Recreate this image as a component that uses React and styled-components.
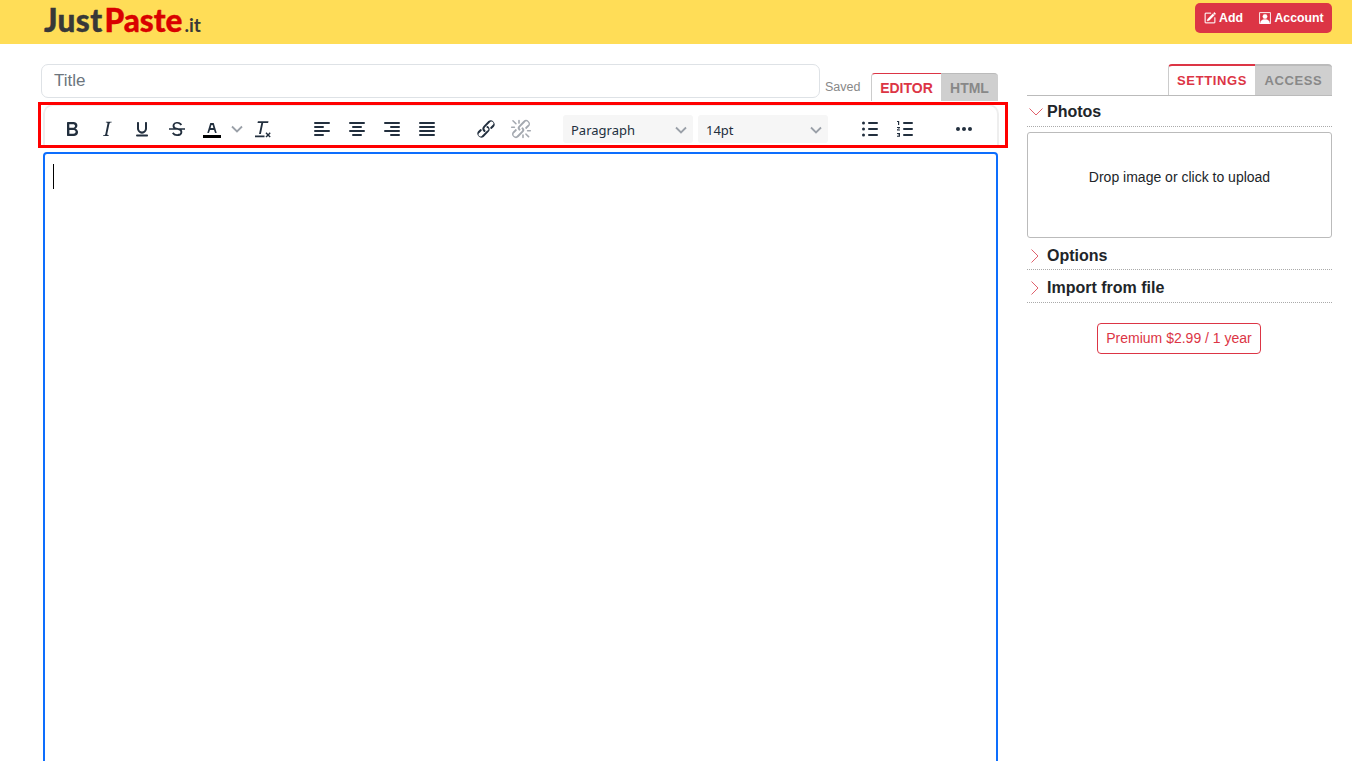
import styled, { createGlobalStyle } from "styled-components";
import { BsPencilSquare, BsPersonSquare } from "react-icons/bs";

const GlobalStyle = createGlobalStyle`
  html, body {
    margin: 0;
    height: 100%;
    overflow: hidden;
    background: #fff;
    font-family: "Liberation Sans", Arial, sans-serif;
    color: #212529;
  }
  * { box-sizing: border-box; }
`;

const Page = styled.div`
  height: 761px;
  overflow: hidden;
`;

const Header = styled.header`
  height: 44px;
  background: #ffdd57;
  display: flex;
  justify-content: space-between;
  padding: 3px 20px 0 44px;
`;

const Logo = styled.div`
  font-family: Lato, "Open Sans", sans-serif;
  font-weight: 900;
  font-size: 31.5px;
  line-height: 34px;
  letter-spacing: 0.4px;
  color: #383838;
  -webkit-text-stroke: 0.4px currentColor;
  white-space: nowrap;
`;

const LogoRed = styled.span`
  margin-left: 2px;
  letter-spacing: 0;
  color: #d90000;
`;

const LogoTld = styled.span`
  margin-left: 2px;
  font-size: 19px;
  font-weight: 700;
  letter-spacing: 0;
  -webkit-text-stroke: 0;
`;

const UserMenu = styled.div`
  width: 137px;
  height: 30px;
  background: #dc3545;
  border-radius: 5px;
  display: flex;
  align-items: center;
  gap: 16.5px;
  padding-left: 9px;
`;

const MenuLink = styled.a`
  display: flex;
  align-items: center;
  gap: 3px;
  color: #fff;
  font-size: 12.3px;
  font-weight: 700;
  svg { font-size: 12px; stroke: currentColor; stroke-width: 0.4; }
`;

const Main = styled.main`
  display: flex;
  gap: 29px;
  padding: 20px 20px 0 41px;
`;

const EditorColumn = styled.section`
  width: 957px;
  flex: none;
`;

const TopRow = styled.div`
  display: flex;
  height: 37px;
`;

const TitleInput = styled.div`
  width: 779px;
  height: 34px;
  border: 1px solid #dee2e6;
  border-radius: 7px;
  padding: 0 12px;
  font-size: 17px;
  line-height: 31px;
  color: #6c757d;
`;

const Saved = styled.span`
  margin: 16px 0 0 5px;
  font-size: 12.5px;
  line-height: 14px;
  color: #888;
`;

const Tab = styled.div`
  width: ${(p) => p.$width}px;
  height: 28px;
  display: flex;
  align-items: center;
  justify-content: center;
  font-size: 14px;
  font-weight: 700;
  color: ${(p) => (p.$active ? "#dc3545" : "#888")};
  background: ${(p) => (p.$active ? "#fff" : "#cfcfcf")};
  border-top: 1px solid ${(p) => (p.$active ? "#dc3545" : "#bbb")};
  border-left: ${(p) => (p.$active ? "1px solid #ccc" : "0")};
  border-radius: ${(p) => (p.$active ? "4px 0 0 0" : "0 4px 0 0")};
`;

const SidebarTab = styled(Tab)`
  height: 31px;
  font-size: 13px;
  letter-spacing: 0.6px;
  border-top-width: 2px;
`;

const EditorTabs = styled.div`
  display: flex;
  margin: 9px 0 0 auto;
  height: 28px;
`;

const ToolbarWrap = styled.div`
  position: relative;
  margin: 3px -1px 0 2px;
`;

const Toolbar = styled.div`
  height: 44px;
  display: flex;
  gap: 25px;
  padding: 6px 0 0 10px;
  border: 2px solid #eee;
  border-bottom: 0;
  border-radius: 10px 10px 0 0;
`;

const Highlight = styled.div`
  position: absolute;
  left: -5px;
  right: -9px;
  top: -2px;
  height: 46px;
  border: 3px solid #f00;
  pointer-events: none;
`;

const Group = styled.div`
  display: flex;
  gap: ${(p) => p.$gap ?? 1}px;
`;

const ToolButton = styled.button`
  width: ${(p) => p.$width ?? 34}px;
  height: 34px;
  padding: 0;
  border: 0;
  background: none;
  display: flex;
  align-items: center;
  justify-content: center;
  color: ${(p) => (p.$disabled ? "#a4a9b0" : "#222f3e")};
  svg { fill: currentColor; display: block; }
`;

const ColorSwatch = styled.span`
  position: absolute;
  left: 8px;
  bottom: 8px;
  width: 18px;
  height: 3px;
  background: #000;
`;

const SplitButton = styled(ToolButton)`
  position: relative;
  justify-content: flex-start;
  padding-left: 5px;
  gap: 5px;
`;

const Select = styled.div`
  width: 130px;
  height: 28px;
  margin-top: 3px;
  background: #f6f6f6;
  border-radius: 3px;
  display: flex;
  align-items: center;
  justify-content: space-between;
  padding: 1px 4px 0 8px;
  font-family: "Noto Sans", "Open Sans", sans-serif;
  font-size: 13px;
  color: #222f3e;
`;

const EditorBody = styled.div`
  margin: 4px 0 0 2px;
  height: 700px;
  border: 2px solid #0d6efd;
  border-radius: 4px;
  padding: 10px 8px;
`;

const Caret = styled.div`
  width: 1px;
  height: 25px;
  background: #000;
`;

const Sidebar = styled.aside`
  width: 305px;
  flex: none;
`;

const SidebarTabs = styled.div`
  display: flex;
  justify-content: flex-end;
  border-bottom: 1px solid #bbb;
  height: 32px;
`;

const SectionRow = styled.div`
  height: ${(p) => p.$height ?? 32}px;
  display: flex;
  align-items: center;
  gap: ${(p) => (p.$open ? 4 : 6)}px;
  padding: ${(p) => p.$top ?? 2}px 0 0 ${(p) => (p.$open ? 2 : 4)}px;
  border-bottom: 1px dotted #aaa;
  font-size: 16px;
  font-weight: 700;
`;

const ChevronSlot = styled.span`
  width: ${(p) => (p.$open ? 14 : 10)}px;
  display: flex;
  svg { display: block; fill: none; stroke: #e0616c; stroke-width: 1; }
`;

const DropZone = styled.div`
  height: 106px;
  margin: 5px 0 2px;
  border: 1px solid #bbb;
  border-radius: 3px;
  display: flex;
  justify-content: center;
  padding-top: 36px;
  font-size: 14px;
  line-height: 17px;
`;

const PremiumWrap = styled.div`
  display: flex;
  margin-top: 20px;
  padding-left: 70px;
`;

const PremiumLink = styled.a`
  width: 164px;
  height: 31px;
  border: 1px solid #dc3545;
  border-radius: 4px;
  color: #dc3545;
  font-size: 14px;
  line-height: 29px;
  text-align: center;
`;

const ChevronIcon = styled.svg`
  && {
    flex: none;
    fill: none;
    stroke: #9aa0a8;
    stroke-width: 1.8;
  }
`;

const Icon = ({ d, size = 24 }) => (
  <svg width={size} height={size} viewBox="0 0 24 24">
    <path d={d} />
  </svg>
);

const Chevron = () => (
  <ChevronIcon width="16" height="16" viewBox="0 0 16 16">
    <path d="M3 5.5l5 5 5-5" />
  </ChevronIcon>
);

const icons = {
  bold: "M7.8 19c-.3 0-.5 0-.6-.2l-.2-.5V5.7c0-.2 0-.4.2-.5l.6-.2h5c1.5 0 2.7.3 3.5 1 .7.6 1.1 1.4 1.1 2.5a3 3 0 0 1-.6 1.9c-.4.6-1 1-1.6 1.2.4.1.9.3 1.3.6s.8.7 1 1.2c.4.4.5 1 .5 1.6 0 1.3-.4 2.3-1.3 3-.8.7-2.1 1-3.8 1H7.8zm5-8.3c.6 0 1.2-.1 1.6-.5.4-.3.6-.7.6-1.3 0-1.1-.8-1.7-2.3-1.7H9.3v3.5h3.4zm.5 6c.7 0 1.3-.1 1.7-.4.4-.4.6-.9.6-1.5s-.2-1-.7-1.4c-.4-.3-1-.4-2-.4H9.4v3.8h4z",
  italic: "M16.7 4.7l-.1.9h-.3c-.6 0-1 0-1.4.3-.3.3-.4.6-.5 1.1l-2.1 9.8v.6c0 .5.4.8 1.4.8h.2l-.2.8H8l.2-.8h.2c1.1 0 1.8-.5 2-1.5l2-9.8.1-.5c0-.6-.4-.8-1.4-.8h-.3l.2-.9h5.8z",
  underline: "M16 5c.6 0 1 .4 1 1v5.5a4 4 0 0 1-.4 1.8l-.5 1a4 4 0 0 1-1.5 1.5 4.6 4.6 0 0 1-5.2 0 4 4 0 0 1-1.5-1.5l-.5-1a4 4 0 0 1-.4-1.8V6c0-.6.4-1 1-1s1 .4 1 1v5.5c0 1.7 1.3 3 3 3s3-1.3 3-3V6c0-.6.4-1 1-1zM7 17.5h10c.6 0 1 .4 1 1s-.4 1-1 1H7a1 1 0 0 1 0-2z",
  strike: "M15.6 8.5c-.5-.7-1-1.1-1.3-1.3-.6-.4-1.3-.6-2-.6-2.7 0-2.8 1.7-2.8 2.1 0 1.6 1.8 2 3.2 2.3 4.4.9 4.6 2.8 4.6 3.9 0 1.4-.7 4.1-5 4.1A6.2 6.2 0 0 1 7 16.4l1.5-1.1c.4.6 1.6 2 3.7 2 1.6 0 2.5-.4 3-1.2.4-.8.3-2-.8-2.6-.7-.4-1.6-.7-2.9-1-1-.2-3.9-.8-3.9-3.6C7.6 6 10.3 5 12.4 5c2.9 0 4.2 1.6 4.7 2.4l-1.5 1.1zM4 11.2h16v1.6H4z",
  colorA: "M8.7 16h-.8a.5.5 0 0 1-.5-.6l2.7-9c.1-.3.3-.4.5-.4h2.8c.2 0 .4.1.5.4l2.7 9a.5.5 0 0 1-.5.6h-.8a.5.5 0 0 1-.4-.4l-.7-2.2c0-.3-.3-.4-.5-.4h-3.4c-.2 0-.4.1-.5.4l-.7 2.2c0 .3-.2.4-.4.4zm2.6-7.6l-.6 2a.5.5 0 0 0 .5.6h1.6a.5.5 0 0 0 .5-.6l-.6-2c0-.3-.3-.4-.5-.4h-.4c-.2 0-.4.1-.5.4z",
  clear: "M12.2 6l-2.3 11H8l2.3-11H6.5l.4-1.8h10.6L17.1 6h-4.9zM4 18.5h9.5v1.8H4zM15.5 15.2l1.6 1.7 1.6-1.7 1 1-1.6 1.7 1.6 1.7-1 1-1.6-1.7-1.6 1.7-1-1 1.6-1.7-1.6-1.7z",
  alignLeft: "M5 5h14a1 1 0 0 1 0 2H5a1 1 0 1 1 0-2zm0 4h8a1 1 0 0 1 0 2H5a1 1 0 0 1 0-2zm0 4h14a1 1 0 0 1 0 2H5a1 1 0 0 1 0-2zm0 4h8a1 1 0 0 1 0 2H5a1 1 0 0 1 0-2z",
  alignCenter: "M5 5h14a1 1 0 0 1 0 2H5a1 1 0 1 1 0-2zm3 4h8a1 1 0 0 1 0 2H8a1 1 0 1 1 0-2zm0 8h8a1 1 0 0 1 0 2H8a1 1 0 0 1 0-2zm-3-4h14a1 1 0 0 1 0 2H5a1 1 0 0 1 0-2z",
  alignRight: "M5 5h14a1 1 0 0 1 0 2H5a1 1 0 1 1 0-2zm6 4h8a1 1 0 0 1 0 2h-8a1 1 0 0 1 0-2zm0 8h8a1 1 0 0 1 0 2h-8a1 1 0 0 1 0-2zm-6-4h14a1 1 0 0 1 0 2H5a1 1 0 0 1 0-2z",
  justify: "M5 5h14a1 1 0 0 1 0 2H5a1 1 0 1 1 0-2zm0 4h14a1 1 0 0 1 0 2H5a1 1 0 1 1 0-2zm0 4h14a1 1 0 0 1 0 2H5a1 1 0 0 1 0-2zm0 4h14a1 1 0 0 1 0 2H5a1 1 0 0 1 0-2z",
  link: "M6.2 12.3a1 1 0 0 1 1.4 1.4l-2 2a2 2 0 1 0 2.6 2.8l4.8-4.8a1 1 0 0 0 0-2.8 1 1 0 1 1 1.4-1.3 4 4 0 0 1 0 5.5l-4.8 4.8a4 4 0 0 1-5.5-5.6l2.1-2zm11.6-.6a1 1 0 0 1-1.4-1.4l2-2a2 2 0 1 0-2.6-2.8L11 10.3a2 2 0 0 0 0 2.8 1 1 0 1 1-1.4 1.3 4 4 0 0 1 0-5.5l4.8-4.8a4 4 0 0 1 5.5 5.6l-2.1 2z",
  unlink: "M6.2 12.3a1 1 0 0 1 1.4 1.4l-2 2a2 2 0 1 0 2.6 2.8l4.8-4.8a1 1 0 0 0 0-1.4 1 1 0 1 1 1.4-1.3 2.9 2.9 0 0 1 0 4L9.6 20a3.9 3.9 0 0 1-5.5-5.5l2-2zm11.6-.6a1 1 0 0 1-1.4-1.4l2.1-2a2 2 0 1 0-2.7-2.8L11 10.3a1 1 0 0 0 0 1.4A1 1 0 1 1 9.6 13a2.9 2.9 0 0 1 0-4L14.4 4a3.9 3.9 0 0 1 5.5 5.5l-2 2zM7.6 6.3a.8.8 0 0 1-1 1.1L3.7 4.6a.8.8 0 1 1 1-1.1l2.9 2.8zm12.7 13a.8.8 0 0 1-1.1 1.1l-2.9-2.8a.8.8 0 0 1 1.1-1.1l2.9 2.8zM10 2.8c.4 0 .8.3.8.7v2.6a.8.8 0 0 1-1.6 0V3.5c0-.4.4-.7.8-.7zM2.7 9.5h2.7a.8.8 0 0 1 0 1.6H2.7a.8.8 0 0 1 0-1.6zM14 17.2c.4 0 .8.3.8.7v2.6a.8.8 0 0 1-1.6 0v-2.6c0-.4.4-.7.8-.7zm4.6-4.3h2.7a.8.8 0 0 1 0 1.6h-2.7a.8.8 0 0 1 0-1.6z",
  bullets: "M11 5h8a1 1 0 0 1 0 2h-8a1 1 0 0 1 0-2zm0 6h8a1 1 0 0 1 0 2h-8a1 1 0 0 1 0-2zm0 6h8a1 1 0 0 1 0 2h-8a1 1 0 0 1 0-2zM5.5 4.5a1.5 1.5 0 1 1 0 3 1.5 1.5 0 0 1 0-3zm0 6a1.5 1.5 0 1 1 0 3 1.5 1.5 0 0 1 0-3zm0 6a1.5 1.5 0 1 1 0 3 1.5 1.5 0 0 1 0-3z",
  numbers: "M11 5h8a1 1 0 0 1 0 2h-8a1 1 0 0 1 0-2zm0 6h8a1 1 0 0 1 0 2h-8a1 1 0 0 1 0-2zm0 6h8a1 1 0 0 1 0 2h-8a1 1 0 0 1 0-2zM5 4h1.2v4H5V5H4V4h1zM4 10h3v.9l-2 1.6h2v1H4v-.9l2-1.6H4v-1zm0 6h3v3.8H4v-1h2v-.5H4.8v-.8H6v-.5H4v-1z",
  more: "M6 10a2 2 0 0 0-2 2c0 1.1.9 2 2 2a2 2 0 0 0 2-2 2 2 0 0 0-2-2zm12 0a2 2 0 0 0-2 2c0 1.1.9 2 2 2a2 2 0 0 0 2-2 2 2 0 0 0-2-2zm-6 0a2 2 0 0 0-2 2c0 1.1.9 2 2 2a2 2 0 0 0 2-2 2 2 0 0 0-2-2z",
};

const formatGroup = ["bold", "italic", "underline", "strike"];
const alignGroup = ["alignLeft", "alignCenter", "alignRight", "justify"];

const App = () => {
  return (
    <Page>
      <GlobalStyle />
      <Header>
        <Logo>
          Just<LogoRed>Paste</LogoRed>
          <LogoTld>.it</LogoTld>
        </Logo>
        <UserMenu>
          <MenuLink>
            <BsPencilSquare /> Add
          </MenuLink>
          <MenuLink>
            <BsPersonSquare /> Account
          </MenuLink>
        </UserMenu>
      </Header>
      <Main>
        <EditorColumn>
          <TopRow>
            <TitleInput>Title</TitleInput>
            <Saved>Saved</Saved>
            <EditorTabs>
              <Tab $active $width={70}>EDITOR</Tab>
              <Tab $width={57}>HTML</Tab>
            </EditorTabs>
          </TopRow>
          <ToolbarWrap>
            <Toolbar>
              <Group>
                {formatGroup.map((name) => (
                  <ToolButton key={name}>
                    <Icon d={icons[name]} />
                  </ToolButton>
                ))}
                <SplitButton $width={50}>
                  <Icon d={icons.colorA} />
                  <ColorSwatch />
                  <Chevron />
                </SplitButton>
                <ToolButton>
                  <Icon d={icons.clear} />
                </ToolButton>
              </Group>
              <Group>
                {alignGroup.map((name) => (
                  <ToolButton key={name}>
                    <Icon d={icons[name]} />
                  </ToolButton>
                ))}
              </Group>
              <Group>
                <ToolButton>
                  <Icon d={icons.link} />
                </ToolButton>
                <ToolButton $disabled>
                  <Icon d={icons.unlink} />
                </ToolButton>
              </Group>
              <Group $gap={5}>
                <Select>
                  Paragraph <Chevron />
                </Select>
                <Select>
                  14pt <Chevron />
                </Select>
              </Group>
              <Group>
                <ToolButton>
                  <Icon d={icons.bullets} />
                </ToolButton>
                <ToolButton>
                  <Icon d={icons.numbers} />
                </ToolButton>
              </Group>
              <ToolButton>
                <Icon d={icons.more} />
              </ToolButton>
            </Toolbar>
            <Highlight />
          </ToolbarWrap>
          <EditorBody>
            <Caret />
          </EditorBody>
        </EditorColumn>
        <Sidebar>
          <SidebarTabs>
            <SidebarTab $active $width={87}>SETTINGS</SidebarTab>
            <SidebarTab $width={77}>ACCESS</SidebarTab>
          </SidebarTabs>
          <SectionRow $open $height={31}>
            <ChevronSlot $open>
              <svg width="14" height="8" viewBox="0 0 14 8">
                <path d="M.5.5L7 7 13.5.5" />
              </svg>
            </ChevronSlot>
            Photos
          </SectionRow>
          <DropZone>Drop image or click to upload</DropZone>
          <SectionRow $height={30}>
            <ChevronSlot>
              <svg width="8" height="14" viewBox="0 0 8 14">
                <path d="M.5.5L7 7 .5 13.5" />
              </svg>
            </ChevronSlot>
            Options
          </SectionRow>
          <SectionRow $height={33} $top={3}>
            <ChevronSlot>
              <svg width="8" height="14" viewBox="0 0 8 14">
                <path d="M.5.5L7 7 .5 13.5" />
              </svg>
            </ChevronSlot>
            Import from file
          </SectionRow>
          <PremiumWrap>
            <PremiumLink>Premium $2.99 / 1 year</PremiumLink>
          </PremiumWrap>
        </Sidebar>
      </Main>
    </Page>
  );
};

export default App;
